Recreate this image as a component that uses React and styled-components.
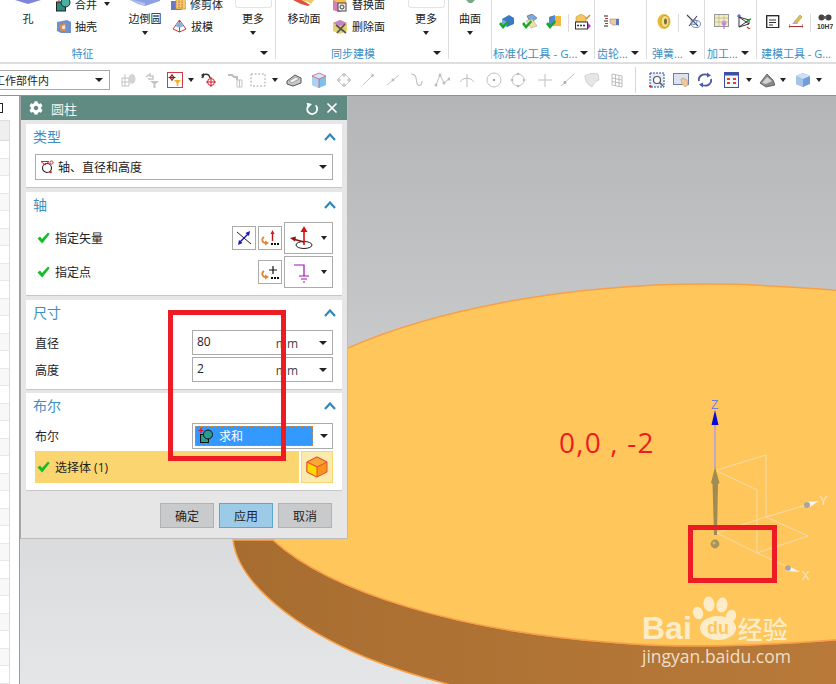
import React from "react";
import styled, { createGlobalStyle } from "styled-components";
import { FaCog } from "react-icons/fa";
import { X } from "lucide-react";

const FONT = `"Open Sans", "Noto Sans CJK SC", sans-serif`;
const BLUE = "#3a8fc4";
const RED = "#ed1c24";

const GlobalStyle = createGlobalStyle`
  html, body { margin: 0; padding: 0; background: #fff; overflow: hidden; }
  body { font-family: ${FONT}; font-size: 12px; color: #222; }
  * { box-sizing: border-box; }
`;

const Screen = styled.div`
  width: 836px;
  height: 684px;
  display: flex;
  flex-direction: column;
  overflow: hidden;
`;

/* ribbon */
const Ribbon = styled.div`
  height: 64px;
  flex: none;
  display: flex;
  background: #fff;
  border-bottom: 2px solid #dedede;
  overflow: hidden;
`;

const Group = styled.div`
  position: relative;
  flex: none;
  width: ${(p) => p.$w}px;
  margin-left: ${(p) => p.$ml || 0}px;
  height: 59px;
  border-right: 1px solid #dcdcdc;
`;

const GroupBody = styled.div`
  height: 46px;
  display: flex;
  align-items: flex-start;
  padding-left: ${(p) => p.$pl || 0}px;
  padding-top: ${(p) => p.$pt || 0}px;
`;

const GroupLabel = styled.div`
  height: 13px;
  font-size: ${(p) => p.$fs || 11}px;
  line-height: 15px;
  color: ${BLUE};
  white-space: nowrap;
  text-align: ${(p) => (p.$left ? "left" : "center")};
  padding-left: ${(p) => p.$pl || 0}px;
  padding-right: ${(p) => p.$pr || 0}px;
`;

const GroupCaret = styled.span`
  position: absolute;
  right: ${(p) => p.$r || 6}px;
  bottom: 4px;
  border-left: 4px solid transparent;
  border-right: 4px solid transparent;
  border-top: 4px solid #222;
`;

const Column = styled.div`
  flex: none;
  width: ${(p) => p.$w}px;
  display: flex;
  flex-direction: column;
  align-items: center;
  font-size: 11px;
  line-height: 14px;
  white-space: nowrap;
`;

const CropSlot = styled.div`
  height: 12px;
  width: 100%;
  display: flex;
  justify-content: center;
  align-items: flex-start;
`;

const ColumnCaret = styled.span`
  margin-top: 5px;
  border-left: 3.5px solid transparent;
  border-right: 3.5px solid transparent;
  border-top: 4px solid #222;
`;

const Stack = styled.div`
  flex: none;
  width: ${(p) => p.$w}px;
  margin-top: -7px;
  display: flex;
  flex-direction: column;
`;

const StackRow = styled.div`
  height: 22px;
  display: flex;
  align-items: center;
  font-size: 11px;
  white-space: nowrap;
  padding-left: ${(p) => p.$pl || 0}px;
`;

const StackText = styled.span`
  margin-left: ${(p) => p.$ml || 4}px;
`;

const StackCaret = styled.span`
  margin-left: 7px;
  border-left: 3.5px solid transparent;
  border-right: 3.5px solid transparent;
  border-top: 4px solid #222;
`;

const MoreBox = styled.div`
  width: 37px;
  height: 8px;
  background: #fff;
  border: 1px solid #e4e4e4;
  border-top: 0;
  border-radius: 0 0 3px 3px;
`;

const Glyph = styled.svg`
  flex: none;
  display: block;
  width: ${(p) => p.$w || 16}px;
  height: ${(p) => p.$h || p.$w || 16}px;
  margin-left: ${(p) => p.$ml || 0}px;
`;

const Divider = styled.span`
  flex: none;
  width: 1px;
  height: 18px;
  margin-left: ${(p) => p.$ml || 6}px;
  background: #dcdcdc;
`;

const Ic = ({ w = 16, h, vb, ml, children }) => (
  <Glyph $w={w} $h={h} $ml={ml} viewBox={vb || `0 0 ${w} ${h || w}`}>
    {children}
  </Glyph>
);

/* toolbar */
const Toolbar = styled.div`
  height: 32px;
  flex: none;
  display: flex;
  align-items: center;
  background: #fff;
  border-bottom: 1px solid #8e9494;
`;

const FilterSelect = styled.div`
  flex: none;
  width: 110px;
  height: 20px;
  display: flex;
  align-items: center;
  justify-content: space-between;
  border: 1px solid #a8a8a8;
  border-left: 0;
  font-size: 11px;
  padding-right: 6px;
  white-space: nowrap;
  overflow: hidden;
`;

const FilterText = styled.span`
  margin-left: -6px;
`;

const ToolCaret = styled.span`
  flex: none;
  margin-left: ${(p) => p.$ml || 4}px;
  border-left: 3.5px solid transparent;
  border-right: 3.5px solid transparent;
  border-top: 4px solid #222;
`;

const ToolDivider = styled.span`
  flex: none;
  width: 1px;
  height: 26px;
  margin-left: ${(p) => p.$ml}px;
  background: #d6d6d6;
`;

const Caret = styled.span`
  flex: none;
  border-left: 4px solid transparent;
  border-right: 4px solid transparent;
  border-top: 4px solid #222;
`;

/* main area */
const Main = styled.div`
  position: relative;
  flex: 1;
  display: flex;
  min-height: 0;
`;

const LeftPanel = styled.div`
  flex: none;
  width: 20px;
  background: #fff;
  border-right: 1px solid #9a9c9e;
  padding-top: 7px;
  overflow: hidden;
`;

const PanelMark = styled.div`
  width: 3px;
  height: 10px;
  border: 1px solid #222;
  border-left: 0;
`;

const PanelTable = styled.div`
  width: 10px;
  margin-top: 7px;
  border: 1px solid #dedede;
  border-left: 0;
`;

const PanelHead = styled.div`
  height: 20px;
  background: #efefef;
  border-bottom: 1px solid #dcdcdc;
`;

const PanelRow = styled.div`
  height: 17.5px;
  background: ${(p) => (p.$alt ? "#f8f8f8" : "#fff")};
  border-bottom: 1px solid #e8e8e8;
`;

const Viewport = styled.div`
  position: relative;
  flex: 1;
  background: linear-gradient(180deg, #b4b5b7 0%, #c4c5c7 35%, #d8d9db 70%, #e5e6e8 100%);
`;

const Scene = styled.svg`
  display: block;
  width: 816px;
  height: 588px;
`;

/* dialog */
const Dialog = styled.div`
  position: absolute;
  left: 20px;
  top: 0;
  width: 328px;
  background: #e6e6e6;
  border-right: 1px solid #bcbcbc;
  border-bottom: 1px solid #bcbcbc;
  border-left: 1px solid #a8a8a8;
`;

const TitleBar = styled.div`
  height: 24px;
  display: flex;
  align-items: center;
  gap: 5px;
  padding: 0 7px 0 8px;
  background: #5f8b82;
  color: #fff;
  font-size: 13px;
`;

const TitleText = styled.span`
  flex: 1;
  color: #eef4f2;
  margin-left: 3px;
`;

const DialogBody = styled.div`
  display: flex;
  flex-direction: column;
  padding: 4px 5px 0;
`;

const Section = styled.section`
  background: #fff;
  border-bottom: 1px solid #c6c6c6;
  padding: 0 9px ${(p) => p.$pb || 7}px;
  margin-bottom: ${(p) => p.$mb ?? 4}px;
`;

const SectionHead = styled.div`
  height: 30px;
  display: flex;
  justify-content: space-between;
  padding-top: 3px;
  margin-left: -2px;
  font-size: 14px;
  line-height: 20px;
  color: ${BLUE};
`;

const Chevron = styled.svg`
  width: 12px;
  height: 8px;
  margin-top: 6px;
  margin-right: -3px;
`;

const Field = styled.div`
  display: flex;
  align-items: center;
  height: ${(p) => p.$h || 25}px;
  margin-top: ${(p) => p.$mt || 0}px;
`;

const CheckSlot = styled.span`
  flex: none;
  width: 13px;
  margin: 0 5px 0 2px;
  display: flex;
`;

const FieldLabel = styled.span`
  flex: 1;
  font-size: 12px;
`;

const DropBox = styled.div`
  flex: none;
  width: ${(p) => p.$w || 141}px;
  height: ${(p) => p.$h || 25}px;
  display: flex;
  align-items: center;
  background: #fff;
  border: 1px solid #ababab;
  padding: ${(p) => p.$pad || "0 5px 0 4px"};
  font-size: 12px;
`;

const TypeText = styled.span`
  flex: 1;
  margin-left: 4px;
`;

const ValueText = styled.span`
  flex: 1;
  position: relative;
  top: -1px;
  color: #222;
`;

const UnitText = styled.span`
  color: #444;
  margin-right: 21px;
  position: relative;
  top: 1px;
`;

const IconButton = styled.div`
  flex: none;
  width: 24px;
  height: 24px;
  margin-right: 2px;
  display: flex;
  align-items: center;
  justify-content: center;
  border: 1px solid #ababab;
  background: #fff;
`;

const VectorBox = styled.div`
  flex: none;
  width: 49px;
  height: 32px;
  display: flex;
  align-items: center;
  justify-content: space-between;
  padding: 0 5px 0 5px;
  border: 1px solid #ababab;
`;

const SmallCaret = styled.span`
  flex: none;
  border-left: 3.5px solid transparent;
  border-right: 3.5px solid transparent;
  border-top: 4px solid #222;
`;

const BoolValue = styled.div`
  flex: none;
  width: 118px;
  height: 20px;
  display: flex;
  align-items: center;
  gap: 5px;
  padding-left: 2px;
  margin-right: 7px;
  background: #3399ff;
  border: 1px dashed #c9863e;
  color: #fff;
`;

const SelectBar = styled.div`
  flex: 1;
  height: 32px;
  display: flex;
  align-items: center;
  background: #fbd56f;
  font-size: 12px;
`;

const Swatch = styled.div`
  flex: none;
  width: 32px;
  height: 32px;
  margin-left: 2px;
  display: flex;
  align-items: center;
  justify-content: center;
  background: #fbeaae;
  border: 1px solid #fbd56f;
`;

const Footer = styled.div`
  display: flex;
  justify-content: flex-end;
  gap: 5px;
  padding: 8px 15px 10px 0;
`;

const DialogButton = styled.div`
  width: 54px;
  height: 25px;
  display: flex;
  align-items: center;
  justify-content: center;
  font-size: 12px;
  background: ${(p) => (p.$primary ? "#9ccbe8" : "#c9cacc")};
  border: 1px solid ${(p) => (p.$primary ? "#5aa7d3" : "#b2b2b2")};
`;

/* things drawn over the screenshot */
const RedBox = styled.div`
  position: absolute;
  left: ${(p) => p.$x}px;
  top: ${(p) => p.$y}px;
  width: ${(p) => p.$w}px;
  height: ${(p) => p.$h}px;
  border: 5px solid ${RED};
  pointer-events: none;
`;

const Note = styled.div`
  position: absolute;
  left: 559px;
  top: 326px;
  font-family: "Open Sans", sans-serif;
  font-size: 28px;
  letter-spacing: 1.2px;
  line-height: 40px;
  color: ${RED};
  white-space: pre;
`;

const Watermark = styled.div`
  position: absolute;
  left: 642px;
  top: 500px;
  color: #fdecc8;
`;

const LogoRow = styled.div`
  display: flex;
  align-items: flex-end;
  height: 50px;
`;

const LogoBai = styled.span`
  font-family: "Liberation Sans", sans-serif;
  font-weight: 700;
  font-size: 32px;
  line-height: 36px;
`;

const LogoCn = styled.span`
  font-family: "Noto Sans CJK SC", sans-serif;
  font-weight: 500;
  font-size: 25px;
  line-height: 36px;
  margin-left: -2px;
`;

const LogoUrl = styled.div`
  font-family: "Open Sans", sans-serif;
  font-size: 17.5px;
  line-height: 20px;
  color: #efdfc6;
`;

/* ---- drawings ---- */
const Check = () => (
  <Ic w={13} h={12}>
    <path d="M0.5 6.5 L3 4.5 L5 7 L11 0.5 L12.7 2 L5.2 11.5 Z" fill="#18bb2c" />
  </Ic>
);

const UpChevron = () => (
  <Chevron viewBox="0 0 12 8">
    <polyline points="1,7 6,1.5 11,7" fill="none" stroke="#2e88bd" strokeWidth="2.2" />
  </Chevron>
);

const ResetIcon = () => (
  <Ic w={14} h={14}>
    <path d="M3.6 4.6 A5 5 0 1 0 10.6 4.4" fill="none" stroke="#fff" strokeWidth="1.8" />
    <path d="M1.6 1.8 L7 3 L3 7.2 Z" fill="#fff" />
  </Ic>
);

const PointPick = ({ plus }) => (
  <Ic w={20} h={20}>
    <path d="M4 9 C1 11 2 15 6 15" fill="none" stroke="#e8842c" strokeWidth="1.8" />
    <path d="M5 12.5 L9 15 L5 17.5 Z" fill="#e8842c" />
    {plus ? (
      <path d="M13 4 V12 M9 8 H17" stroke="#111" strokeWidth="1.2" />
    ) : (
      <>
        <path d="M12.5 5 V13" stroke="#c01818" strokeWidth="1.4" />
        <path d="M12.5 2 L10.5 6 H14.5 Z" fill="#d81818" />
      </>
    )}
    <path d="M11 16 h2 M14 16 h2 M17 16 h2" stroke="#111" strokeWidth="1.8" />
  </Ic>
);

const toolGlyphs = {
  parts: (
    <>
      <path d="M2 6 H9 V14 H2 Z M5 2 V14 M2 10 H9" fill="none" stroke="#c2c2c2" />
      <ellipse cx="12" cy="7" rx="3.5" ry="5" fill="#d4d4d4" />
    </>
  ),
  filter: (
    <>
      <path d="M2 5 L6 2 V4 H9 V7 H4" fill="none" stroke="#c6c6c6" strokeWidth="1.4" />
      <path d="M6 9 H15 L11.5 12 V16 H9.5 V12 Z" fill="#c4c4c4" />
    </>
  ),
  selected: (
    <>
      <rect x="0.5" y="0.5" width="15" height="15" fill="#fff" stroke="#cf3a44" />
      <path d="M5 2 V9 M1.5 5.5 H8.5" stroke="#8a1c1c" />
      <circle cx="5" cy="5.5" r="2" fill="none" stroke="#8a1c1c" />
      <path d="M7 8 H14 L11.3 11 V14 H9.7 V11 Z" fill="#eeb429" />
    </>
  ),
  rotate: (
    <>
      <path d="M1 6 C2 1 8 1 9 6" fill="none" stroke="#333" strokeWidth="1.3" />
      <path d="M0 3 L3 1 L3 6 Z" fill="#333" />
      <circle cx="10" cy="10" r="3.5" fill="none" stroke="#d21c2c" />
      <path d="M10 5 V15 M5 10 H15" stroke="#d21c2c" />
    </>
  ),
  wave: (
    <>
      <path d="M1 3 h4 l2 2 h3 v3" fill="none" stroke="#bdbdbd" strokeWidth="2" />
      <path d="M10 8 h5 v7 h-5 Z M12.5 8 v7" fill="none" stroke="#c4c4c4" />
    </>
  ),
  dashRect: (
    <path d="M1 2 H15 V14 H1 Z" fill="none" stroke="#a8a8a8" strokeDasharray="2 1.6" />
  ),
  eraser: (
    <>
      <path d="M1 9 L9 3 L15 6 V11 L7 14 L1 12 Z" fill="#c9c9c9" stroke="#555" />
      <path d="M3 9 L10 5 L13 7 L6 11 Z" fill="#f2f2f2" stroke="#777" strokeWidth="0.6" />
    </>
  ),
  cubeBlue: (
    <>
      <path d="M2 4 L9 1 L16 4 V13 L9 16 L2 13 Z" fill="#7fc0ec" />
      <path d="M2 4 L9 7 V16 L2 13 Z" fill="#a6d4f2" />
      <path d="M2 4 L9 1 L16 4 L9 7 Z" fill="#d4e6f4" stroke="#d63c5c" strokeWidth="0.6" />
      <path d="M9 7 V16" stroke="#d63c5c" strokeWidth="0.6" />
    </>
  ),
  orbit: (
    <>
      <path d="M8 1 L15 8 L8 15 L1 8 Z" fill="none" stroke="#cfcfcf" />
      <circle cx="8" cy="3" r="1.8" fill="#c8c8c8" />
      <circle cx="8" cy="13" r="1.8" fill="#c8c8c8" />
      <circle cx="3" cy="8" r="1.8" fill="#c8c8c8" />
      <circle cx="13" cy="8" r="1.8" fill="#c8c8c8" />
    </>
  ),
  line: (
    <>
      <path d="M1 13 L11 3" stroke="#c4c4c4" />
      <circle cx="10.5" cy="3.5" r="1.4" fill="#bdbdbd" />
    </>
  ),
  line2: (
    <>
      <path d="M1 13 L13 3" stroke="#c4c4c4" />
      <circle cx="7" cy="8" r="1.4" fill="#bdbdbd" />
    </>
  ),
  curve: (
    <path d="M1 2 C7 2 6 8 7 11 C8 15 12 14 12 9" fill="none" stroke="#c0c0c0" strokeWidth="1.1" />
  ),
  spline: (
    <>
      <path d="M2 13 L6 3 L10 11 L15 7" fill="none" stroke="#bdbdbd" />
      <circle cx="6" cy="3" r="1.5" fill="#bdbdbd" />
      <circle cx="2" cy="13" r="1.5" fill="#bdbdbd" />
      <circle cx="10" cy="11" r="1.5" fill="#bdbdbd" />
      <circle cx="15" cy="7" r="1.5" fill="#bdbdbd" />
    </>
  ),
  arcAxis: (
    <>
      <path d="M1 10 C4 5 12 5 15 10" fill="none" stroke="#bdbdbd" />
      <path d="M8 2 V15" stroke="#bdbdbd" />
    </>
  ),
  circleDot: (
    <>
      <circle cx="8" cy="8" r="7" fill="none" stroke="#c2c2c2" />
      <circle cx="8" cy="8" r="1.3" fill="#aaa" />
    </>
  ),
  circleNodes: (
    <>
      <circle cx="8" cy="8" r="6" fill="none" stroke="#c2c2c2" />
      <circle cx="8" cy="2" r="1.3" fill="#bbb" />
      <circle cx="8" cy="14" r="1.3" fill="#bbb" />
      <circle cx="2" cy="8" r="1.3" fill="#bbb" />
      <circle cx="14" cy="8" r="1.3" fill="#bbb" />
    </>
  ),
  plus: <path d="M8 2 V15 M1 8 H15" stroke="#c0c0c0" />,
  slash: (
    <>
      <path d="M1 14 L14 2" stroke="#c0c0c0" />
      <circle cx="5" cy="10.5" r="1.4" fill="#aaa" />
    </>
  ),
  sheet: (
    <path d="M1 4 C5 1 11 1 14 2 L15 8 C12 9 10 10 8 15 C4 13 1 9 1 4 Z" fill="#e6e6e6" stroke="#d2d2d2" />
  ),
  grid: (
    <path d="M1 2 L11 4 V15 L1 13 Z M4.5 2.7 V13.7 M8 3.4 V14.4 M1 6 L11 8 M1 9.5 L11 11.5" fill="none" stroke="#bdbdbd" />
  ),
  fitView: (
    <>
      <rect x="1" y="1" width="14" height="14" fill="#e4ecf8" stroke="#304a9c" strokeDasharray="2 1" />
      <circle cx="8" cy="8" r="3.5" fill="#fff" stroke="#555" strokeWidth="1.2" />
      <path d="M10.5 10.5 L14 14" stroke="#555" strokeWidth="1.4" />
      <circle cx="1.5" cy="14.5" r="1.2" fill="#d22" />
    </>
  ),
  pan: (
    <>
      <rect x="0.5" y="1.5" width="15" height="11" fill="#dbe3f0" stroke="#6a7ca8" />
      <path d="M8 7 L10 6 L14 8 L15 13 L12 15 L9 12 Z" fill="#f0c89a" stroke="#b88a5a" strokeWidth="0.5" />
    </>
  ),
  spin: (
    <>
      <path d="M2 9 C1 4 6 1 11 3" fill="none" stroke="#4a5aa8" strokeWidth="1.8" />
      <path d="M14 7 C15 12 10 15 5 13" fill="none" stroke="#4a5aa8" strokeWidth="1.8" />
      <path d="M10 0.5 L14 3.5 L10 5.5 Z" fill="#4a5aa8" />
      <path d="M6 10.5 L2 12.5 L6 15.5 Z" fill="#4a5aa8" />
    </>
  ),
  layout: (
    <>
      <rect x="0.5" y="0.5" width="14" height="15" fill="#f4f6fb" stroke="#3c50a8" />
      <rect x="0.5" y="0.5" width="14" height="3" fill="#3c50a8" />
      <path d="M3 6 h3 v2 h-3 Z M9 6 h3 v2 h-3 Z M3 10 h3 v2 h-3 Z M9 10 h3 v2 h-3 Z" fill="#e23c2c" />
    </>
  ),
  shade: (
    <>
      <path d="M1 11 L8 2 L14 8 L16 13 L7 15 Z" fill="#8a8a8a" stroke="#444" strokeWidth="0.7" />
      <path d="M3 11 L8 5 L13 9 L7 12 Z" fill="#d4d4d4" />
    </>
  ),
  box: (
    <>
      <path d="M1 4 L8 1 L15 4 V12 L8 15 L1 12 Z" fill="#6f9ed8" />
      <path d="M1 4 L8 7 V15 L1 12 Z" fill="#a4c4ec" />
      <path d="M1 4 L8 1 L15 4 L8 7 Z" fill="#cfdff4" />
    </>
  ),
};

const Tool = ({ name, ml }) => (
  <Glyph $w={16} $ml={ml} viewBox="0 0 16 16">
    {toolGlyphs[name]}
  </Glyph>
);

const toolItems = [
  ["parts", 10], ["filter", 8], ["selected", 7], ["caret", 5], ["rotate", 7],
  ["wave", 10], ["dashRect", 7], ["caret", 6], ["eraser", 8], ["cubeBlue", 8],
  ["orbit", 10], ["line", 10], ["line2", 8], ["curve", 8], ["spline", 8],
  ["arcAxis", 9], ["circleDot", 11], ["circleNodes", 8], ["plus", 11],
  ["slash", 7], ["sheet", 8], ["grid", 11], ["divider", 8], ["fitView", 13],
  ["pan", 8], ["spin", 8], ["layout", 11], ["caret", 6], ["shade", 7],
  ["caret", 5], ["box", 9], ["caret", 5],
];

const panelRows = Array.from({ length: 31 }, (_, i) => i);

function Cylinder() {
  const rim = "C 330 592 460 632 620 643 C 680 648 760 648 900 634";
  const topFace = `M273 540 ${rim} L 900 296 C 810 287 760 284 707 284 C 560 284 430 312 348 348 C 300 370 270 450 273 540 Z`;
  const side = `M233 540 L273 540 ${rim} L 900 700 L 500 700 L 447 684 C 420 677 392 668 367 658 C 300 630 238 585 233 540 Z`;
  return (
    <Scene viewBox="20 96 816 588">
      <defs>
        <linearGradient id="sideShade" x1="0" x2="1" y1="0" y2="0">
          <stop offset="0" stopColor="#a76d30" />
          <stop offset="1" stopColor="#ba7b3a" />
        </linearGradient>
      </defs>
      <path d={side} fill="url(#sideShade)" stroke="#f9a24a" strokeWidth="1.5" />
      <path d={topFace} fill="#ffc75b" stroke="#f99f48" strokeWidth="1.5" />

      {/* datum csys */}
      <g fill="none" stroke="#f2dcae" strokeWidth="1">
        <path d="M717 470 L766 455 V517 L717 533" />
        <path d="M717 471 L757 490 V553 L717 533" />
        <path d="M757 553 L808 536 L766 517" />
        <path d="M757 553 L790 568" />
        <path d="M766 517 L806 505" />
      </g>
      <path d="M806 502 L819 501 L808 508 Z" fill="#f6f4ee" />
      <circle cx="807" cy="505" r="3" fill="#a9a59c" />
      <path d="M787 565 L800 572 L786 571 Z" fill="#f6f4ee" />
      <circle cx="788" cy="568" r="2.8" fill="#a9a59c" />
      <text x="820" y="505" fontFamily="Open Sans, sans-serif" fontSize="13" fill="#f6e6c4">Y</text>
      <text x="802" y="580" fontFamily="Open Sans, sans-serif" fontSize="13" fill="#f6e6c4">X</text>
      <text x="711" y="409" fontFamily="Open Sans, sans-serif" fontSize="13" fill="#7a7ae6">Z</text>
      <path d="M715 424 V468" stroke="#c6a4c6" strokeWidth="2" />
      <path d="M715 410 L718.5 425 H711.5 Z" fill="#0a0ad8" />
      <path d="M715 467 L719.5 483 L718 484 L717 535 H714 L712.5 484 L711 483 Z" fill="#a08b52" />
      <circle cx="715" cy="544" r="4.4" fill="#a8935a" />
      <circle cx="714" cy="543" r="1.6" fill="#c9b87e" />
    </Scene>
  );
}

export default function App() {
  return (
    <Screen>
      <GlobalStyle />
      <Ribbon>
        <Group $w={386} $ml={-110}>
          <GroupBody $pl={110}>
            <Column $w={56}>
              <CropSlot>
                <Ic w={26} h={4}>
                  <path d="M0 0 H26 L13 4 Z" fill="#7d86d8" />
                </Ic>
              </CropSlot>
              孔
            </Column>
            <Stack $w={64}>
              <StackRow>
                <Ic w={15} h={15}>
                  <rect x="0.5" y="5" width="9" height="9" fill="#2c8c80" stroke="#222" />
                  <circle cx="9.5" cy="5.5" r="4.5" fill="#4cb0a0" stroke="#222" />
                  <path d="M3 0 V5 M0.5 2.5 H5.5" stroke="#d22" />
                </Ic>
                <StackText>合并</StackText>
                <StackCaret />
              </StackRow>
              <StackRow>
                <Ic w={15} h={15}>
                  <path d="M1 3 L11 1 L15 3 V14 H5 L1 12 Z" fill="#6f8fcf" />
                  <path d="M3 6 L10 4 V12 H5 Z" fill="#e8893c" />
                  <path d="M6 7 L9 6 V10 H6 Z" fill="#f4e0c8" />
                </Ic>
                <StackText>抽壳</StackText>
              </StackRow>
            </Stack>
            <Column $w={50}>
              <CropSlot>
                <Ic w={30} h={6}>
                  <path d="M0 0 H30 V1 L15 6 L8 4 Z" fill="#8ea0e4" />
                  <path d="M0 0 L15 6 V3 L2 0 Z" fill="#b4c2f0" />
                </Ic>
              </CropSlot>
              边倒圆
              <ColumnCaret />
            </Column>
            <Stack $w={63}>
              <StackRow $pl={1}>
                <Ic w={15} h={13}>
                  <path d="M0 3 H11 V12 H0 Z" fill="#6a78c8" />
                  <path d="M5 1 H15 V11 H5 Z" fill="#f2cc6a" stroke="#c88a3a" strokeWidth="0.7" />
                  <path d="M8 1 V11 M11 1 V11" stroke="#c83a3a" strokeWidth="0.8" strokeDasharray="1.5 1" />
                </Ic>
                <StackText>修剪体</StackText>
              </StackRow>
              <StackRow $pl={2}>
                <Ic w={15} h={14}>
                  <path d="M7.5 1 L14 10 L7.5 13 L1 10 Z" fill="#fff" stroke="#d2382c" />
                  <path d="M7.5 1 V13" stroke="#d2382c" />
                  <ellipse cx="7.5" cy="6" rx="3.5" ry="2.5" fill="#8ab0dc" />
                </Ic>
                <StackText>拔模</StackText>
              </StackRow>
            </Stack>
            <Column $w={40}>
              <CropSlot>
                <MoreBox />
              </CropSlot>
              更多
              <ColumnCaret />
            </Column>
          </GroupBody>
          <GroupLabel>特征</GroupLabel>
          <GroupCaret $r={7} />
        </Group>

        <Group $w={173}>
          <GroupBody>
            <Column $w={56}>
              <CropSlot>
                <Ic w={22} h={6}>
                  <path d="M0 0 H9 L17 5 L15 6 L8 4 Z" fill="#e2503c" />
                  <path d="M8 0 H21 L18 4 L15 2 Z" fill="#f0c860" />
                </Ic>
              </CropSlot>
              移动面
            </Column>
            <Stack $w={75}>
              <StackRow>
                <Ic w={15} h={15}>
                  <path d="M1 3 L7 0 L14 2 V13 L7 15 L1 13 Z" fill="#f2c24c" />
                  <path d="M1 3 L7 6 V15 L1 13 Z" fill="#d87cc0" />
                  <rect x="6" y="6" width="8" height="8" fill="#eee" stroke="#444" />
                  <circle cx="10" cy="10" r="2" fill="none" stroke="#444" />
                </Ic>
                <StackText $ml={5}>替换面</StackText>
              </StackRow>
              <StackRow>
                <Ic w={15} h={15}>
                  <path d="M1 4 L8 1 L15 4 V12 L8 15 L1 12 Z" fill="#e4d070" />
                  <path d="M1 4 L8 1 L15 4 L8 7 Z" fill="#c880cc" />
                  <path d="M4 6 L14 14 M13 5 L5 14" stroke="#555" strokeWidth="1.8" />
                </Ic>
                <StackText $ml={5}>删除面</StackText>
              </StackRow>
            </Stack>
            <Column $w={38}>
              <CropSlot>
                <MoreBox />
              </CropSlot>
              更多
              <ColumnCaret />
            </Column>
          </GroupBody>
          <GroupLabel $pr={18}>同步建模</GroupLabel>
          <GroupCaret $r={7} />
        </Group>

        <Group $w={43}>
          <GroupBody>
            <Column $w={42}>
              <CropSlot>
                <Ic w={9} h={3}>
                  <path d="M0 0 H9 L6 3 H3 Z" fill="#78a888" />
                </Ic>
              </CropSlot>
              曲面
              <ColumnCaret />
            </Column>
          </GroupBody>
        </Group>

        <Group $w={103}>
          <GroupBody $pt={14} $pl={7}>
            <Ic w={15}>
              <path d="M3 5 L10 1 L15 4 V10 L8 13 L3 10 Z" fill="#3c78c8" />
              <path d="M3 5 L8 8 V13 L3 10 Z" fill="#78a8e4" />
              <path d="M0 10 L2 8 L4 11 L9 6 L10 8 L4 15 Z" fill="#18a82c" />
            </Ic>
            <Ic w={16} ml={8}>
              <path d="M5 2 L10 0 L15 4 L10 8 L7 6 Z" fill="#7ca8dc" stroke="#445" strokeWidth="0.5" />
              <path d="M4 7 L10 5 L15 12 L9 14 Z" fill="#f0e0a0" stroke="#998" strokeWidth="0.5" />
              <path d="M0 10 L2 8 L4 11 L9 6 L10 8 L4 15 Z" fill="#18a82c" />
            </Ic>
            <Ic w={16} ml={8}>
              <path d="M4 2 H15 V12 H4 Z" fill="#f4b83c" />
              <path d="M3 3 L9 1 V10 L3 12 Z" fill="#4c88d8" />
              <path d="M0 10 L2 8 L4 11 L9 6 L10 8 L4 15 Z" fill="#18a82c" />
            </Ic>
            <Divider $ml={6} />
            <Ic w={16} ml={6}>
              <path d="M1 3 L6 0 L11 3 V8 H1 Z" fill="#f4c860" stroke="#c88a2c" strokeWidth="0.6" />
              <rect x="0.5" y="8" width="12" height="7" fill="#fff" stroke="#333" />
              <path d="M2 11.5 h2 M5 11.5 h2 M8 11.5 h2" stroke="#333" strokeWidth="1.5" />
              <path d="M13 9 L16 12 L13 15 Z" fill="#b040c0" />
              <path d="M11 5 L15 1" stroke="#c88a2c" strokeWidth="1.5" />
            </Ic>
          </GroupBody>
          <GroupLabel $left $pl={1} $fs={11.5}>标准化工具 - G...</GroupLabel>
          <GroupCaret $r={6} />
        </Group>

        <Group $w={52}>
          <GroupBody $pt={14} $pl={9}>
            <Ic w={15}>
              <path d="M0 2 h4 M0 7 h4 M0 12 h4" stroke="#222" strokeWidth="1" />
              <path d="M1 4.5 h3 M1 9.5 h3" stroke="#d22" strokeWidth="1" />
              <path d="M6 5 H15 V11 H9 L6 9 Z" fill="#f0c8a0" stroke="#8a7a6a" strokeWidth="0.5" />
              <rect x="12" y="5" width="3" height="6" fill="#5a78b8" />
            </Ic>
          </GroupBody>
          <GroupLabel $left $pl={2}>齿轮...</GroupLabel>
          <GroupCaret $r={7} />
        </Group>

        <Group $w={58}>
          <GroupBody $pt={14} $pl={10}>
            <Ic w={14} h={15}>
              <ellipse cx="7" cy="7.5" rx="6.5" ry="7.5" fill="#e4bc3c" />
              <ellipse cx="8" cy="7.5" rx="4" ry="6" fill="#f4e080" stroke="#a8842c" strokeWidth="0.6" />
              <ellipse cx="8.5" cy="7.5" rx="1.5" ry="3" fill="#7a6a3a" />
            </Ic>
            <Divider $ml={7} />
            <Ic w={15} ml={7}>
              <path d="M1 1 L12 12 M11 2 L3 12" stroke="#444" strokeWidth="1.1" />
              <ellipse cx="10" cy="10" rx="4.5" ry="3.5" fill="none" stroke="#6a8ac8" />
              <ellipse cx="8" cy="8" rx="3" ry="2.5" fill="none" stroke="#6a8ac8" />
            </Ic>
          </GroupBody>
          <GroupLabel $left $pl={5}>弹簧...</GroupLabel>
          <GroupCaret $r={7} />
        </Group>

        <Group $w={52}>
          <GroupBody $pt={14} $pl={9}>
            <Ic w={15}>
              <rect x="0.5" y="0.5" width="14" height="12" fill="#f4eeb8" stroke="#999" />
              <path d="M0.5 4 H14.5 M0.5 8 H14.5 M5 0.5 V12.5 M10 0.5 V12.5" stroke="#a8a8a8" strokeWidth="0.6" />
              <circle cx="10" cy="9" r="2.5" fill="#c898d8" />
              <path d="M10 9 V16" stroke="#c060d0" />
            </Ic>
            <Ic w={15} ml={7}>
              <path d="M3 3 V13 L13 10 V6 L3 3 L13 10 M3 13 L13 6" fill="none" stroke="#333" />
              <path d="M3 0 V4 M1 2 h4" stroke="#2c48c8" />
              <path d="M11 7 L15 5" stroke="#18a82c" strokeWidth="1.4" />
              <path d="M11 13 L14 15" stroke="#d23c3c" strokeWidth="1.4" />
            </Ic>
          </GroupBody>
          <GroupLabel $left $pl={2}>加工...</GroupLabel>
          <GroupCaret $r={7} />
        </Group>

        <Group $w={90}>
          <GroupBody $pt={14} $pl={9}>
            <Ic w={14}>
              <rect x="0.7" y="1.7" width="12" height="12" fill="#fff" stroke="#222" strokeWidth="1.3" />
              <path d="M3 6 H10 M3 8.5 H10 M3 11 H7" stroke="#333" />
            </Ic>
            <Ic w={14} ml={9}>
              <path d="M0 10 V15 M14 10 V15 M0 12.5 H14" stroke="#b02c2c" />
              <path d="M5 8 L11 1 L13 3 L8 9 Z" fill="#e4c048" stroke="#8a7a4a" strokeWidth="0.5" />
              <path d="M3 10 L6 7 L9 10 Z" fill="#b8b098" />
            </Ic>
            <Divider $ml={7} />
            <Ic w={16} ml={6}>
              <circle cx="4.5" cy="3.5" r="3" fill="#444" />
              <circle cx="11.5" cy="3.5" r="3" fill="#444" />
              <rect x="6.5" y="2" width="3" height="3" fill="#666" />
              <text x="0" y="14.5" fontFamily="Liberation Sans, sans-serif" fontSize="6.8" fontWeight="700" fill="#333">10H7</text>
            </Ic>
          </GroupBody>
          <GroupLabel $left $pl={4}>建模工具 - G...</GroupLabel>
        </Group>
      </Ribbon>

      <Toolbar>
        <FilterSelect>
          <FilterText>工作部件内</FilterText>
          <Caret />
        </FilterSelect>
        {toolItems.map(([name, ml], i) =>
          name === "caret" ? (
            <ToolCaret key={i} $ml={ml} />
          ) : name === "divider" ? (
            <ToolDivider key={i} $ml={ml} />
          ) : (
            <Tool key={i} name={name} ml={ml} />
          )
        )}
      </Toolbar>

      <Main>
        <LeftPanel>
          <PanelMark />
          <PanelTable>
            <PanelHead />
            {panelRows.map((i) => (
              <PanelRow key={i} $alt={i % 2 === 1} />
            ))}
          </PanelTable>
        </LeftPanel>
        <Viewport>
          <Cylinder />
        </Viewport>

        <Dialog>
          <TitleBar>
            <FaCog size={14} />
            <TitleText>圆柱</TitleText>
            <ResetIcon />
            <X size={16} strokeWidth={2.6} />
          </TitleBar>
          <DialogBody>
            <Section>
              <SectionHead>
                类型
                <UpChevron />
              </SectionHead>
              <DropBox $w={298} $h={26}>
                <Ic w={14}>
                  <circle cx="7" cy="8" r="4.5" fill="none" stroke="#222" strokeWidth="1.1" />
                  <path d="M1 1.5 H9 L5 5 Z" fill="none" stroke="#d22" />
                  <circle cx="11.5" cy="2.5" r="1.6" fill="none" stroke="#d22" />
                  <circle cx="10.5" cy="12" r="1.3" fill="#d22" />
                </Ic>
                <TypeText>轴、直径和高度</TypeText>
                <Caret />
              </DropBox>
            </Section>

            <Section>
              <SectionHead>
                轴
                <UpChevron />
              </SectionHead>
              <Field $h={32}>
                <CheckSlot>
                  <Check />
                </CheckSlot>
                <FieldLabel>指定矢量</FieldLabel>
                <IconButton>
                  <Ic w={18} h={18}>
                    <path d="M2 3 L16 15" stroke="#222" />
                    <path d="M13 5 L5 13" stroke="#1414c8" strokeWidth="1.4" />
                    <path d="M15 2 L14 7 L10.5 4 Z M3 16 L4 11 L7.5 14 Z" fill="#1414c8" />
                  </Ic>
                </IconButton>
                <IconButton>
                  <PointPick />
                </IconButton>
                <VectorBox>
                  <Ic w={24} h={26}>
                    <ellipse cx="14" cy="20" rx="8" ry="3.5" fill="none" stroke="#222" />
                    <path d="M14 5 V20" stroke="#d81010" strokeWidth="1.6" />
                    <path d="M14 1 L10.5 7 H17.5 Z" fill="#d81010" />
                    <path d="M14 17 L3 14" stroke="#901010" strokeWidth="1.6" />
                    <path d="M0 13 L6 11.5 L5 16.5 Z" fill="#901010" />
                  </Ic>
                  <SmallCaret />
                </VectorBox>
              </Field>
              <Field $h={32} $mt={2}>
                <CheckSlot>
                  <Check />
                </CheckSlot>
                <FieldLabel>指定点</FieldLabel>
                <IconButton>
                  <PointPick plus />
                </IconButton>
                <VectorBox>
                  <Ic w={20} h={22} ml={3}>
                    <path d="M1 4 H11 V15 M6 15 H16 M8 18 H14 M10 21 H12" fill="none" stroke="#a010b0" strokeWidth="1.2" />
                  </Ic>
                  <SmallCaret />
                </VectorBox>
              </Field>
            </Section>

            <Section $mb={3}>
              <SectionHead>
                尺寸
                <UpChevron />
              </SectionHead>
              <Field>
                <FieldLabel>直径</FieldLabel>
                <DropBox>
                  <ValueText>80</ValueText>
                  <UnitText>mm</UnitText>
                  <Caret />
                </DropBox>
              </Field>
              <Field $mt={2}>
                <FieldLabel>高度</FieldLabel>
                <DropBox>
                  <ValueText>2</ValueText>
                  <UnitText>mm</UnitText>
                  <Caret />
                </DropBox>
              </Field>
            </Section>

            <Section>
              <SectionHead>
                布尔
                <UpChevron />
              </SectionHead>
              <Field $h={26}>
                <FieldLabel>布尔</FieldLabel>
                <DropBox $h={26} $pad="0 4px 0 2px">
                  <BoolValue>
                    <Ic w={16}>
                      <rect x="2.5" y="6.5" width="8" height="8" fill="#2c9c90" stroke="#111" />
                      <circle cx="10" cy="6.5" r="4.5" fill="#2c9c90" stroke="#111" />
                      <path d="M3 0 V5 M0.5 2.5 H5.5" stroke="#e01818" strokeWidth="1.2" />
                    </Ic>
                    求和
                  </BoolValue>
                  <Caret />
                </DropBox>
              </Field>
              <Field $h={32} $mt={2}>
                <SelectBar>
                  <CheckSlot>
                    <Check />
                  </CheckSlot>
                  选择体 (1)
                </SelectBar>
                <Swatch>
                  <Ic w={22} h={22}>
                    <path d="M11 1 L21 6 V16 L11 21 L1 16 V6 Z" fill="#f7941d" stroke="#e8502c" />
                    <path d="M1 6 L11 11 L21 6 L11 1 Z" fill="#f9a838" stroke="#e8502c" />
                    <path d="M1 6 L11 11 V21 L1 16 Z" fill="#ffd800" stroke="#e8502c" />
                  </Ic>
                </Swatch>
              </Field>
            </Section>
          </DialogBody>
          <Footer>
            <DialogButton>确定</DialogButton>
            <DialogButton $primary>应用</DialogButton>
            <DialogButton>取消</DialogButton>
          </Footer>
        </Dialog>

        <RedBox $x={168} $y={214} $w={118} $h={151} />
        <RedBox $x={688} $y={429} $w={89} $h={58} />
        <Note>{"0,0 , -2"}</Note>

        <Watermark>
          <LogoRow>
            <LogoBai>Bai</LogoBai>
            <Ic w={48} h={50}>
              <ellipse cx="6" cy="17" rx="5" ry="6.5" transform="rotate(-20 6 17)" fill="#fdecc8" />
              <ellipse cx="17" cy="8" rx="5.5" ry="7.5" transform="rotate(-8 17 8)" fill="#fdecc8" />
              <ellipse cx="30" cy="9" rx="5.5" ry="7.5" transform="rotate(8 30 9)" fill="#fdecc8" />
              <ellipse cx="39" cy="20" rx="5" ry="6.5" transform="rotate(20 39 20)" fill="#fdecc8" />
              <ellipse cx="26" cy="32" rx="18" ry="12" fill="#fdecc8" />
              <text x="26" y="38" textAnchor="middle" fontFamily="Liberation Sans, sans-serif" fontSize="18" fontWeight="700" fill="#ffc75b">du</text>
            </Ic>
            <LogoCn>经验</LogoCn>
          </LogoRow>
          <LogoUrl>jingyan.baidu.com</LogoUrl>
        </Watermark>
      </Main>
    </Screen>
  );
}
